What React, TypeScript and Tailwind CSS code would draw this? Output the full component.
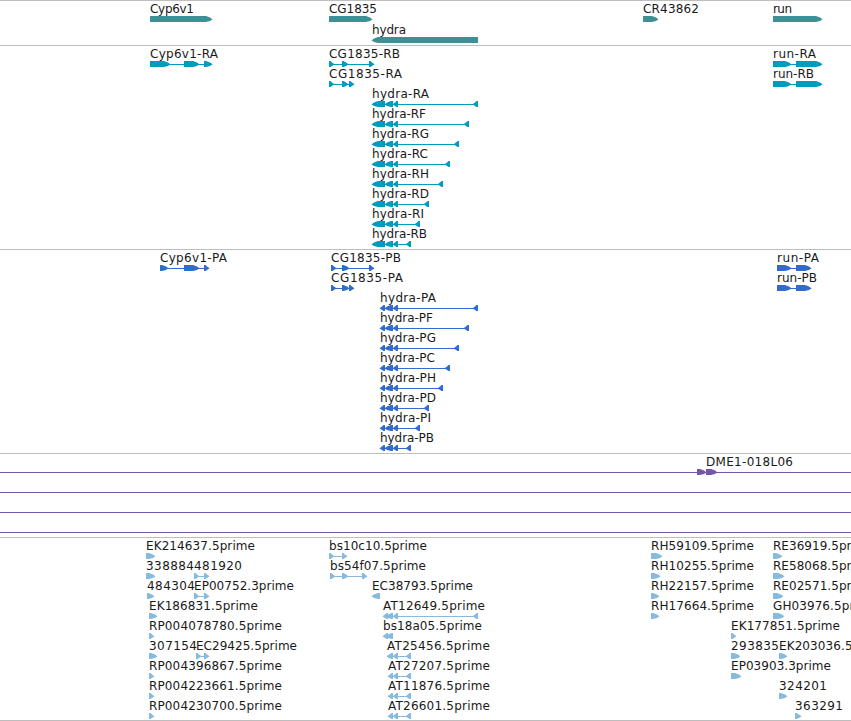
type Exon = [start: number, end: number];

type Feature = {
  label: string;
  x: number;
  width: number;
  exons: Exon[];
  reverse?: boolean;
};

type Row = {
  features: Feature[];
  // the alignment runs past both edges of the view
  spans?: boolean;
};

type Track = {
  id: string;
  className: string;
  rowClassName: string;
  rows: Row[];
};

const VIEW_WIDTH = 851;
const BAR_TOP = 13;
const BAR_HEIGHT = 6;

const fwd = (label: string, x: number, width: number, ...exons: Exon[]): Feature => ({ label, x, width, exons });

const rev = (label: string, x: number, width: number, ...exons: Exon[]): Feature => ({
  label,
  x,
  width,
  exons,
  reverse: true,
});

const hydraRna = (label: string, width: number, end: number) =>
  rev(label, 372, width, [372, 385], [385, 393], [393, 398], [end - 5, end]);

const hydraProtein = (label: string, width: number, end: number) =>
  rev(label, 380, width, [380, 385], [385, 393], [393, 398], [end - 5, end]);

const one = (feature: Feature): Row => ({ features: [feature] });

const tracks: Track[] = [
  {
    id: "gene",
    className: "h-[45px] text-[#3f8f94]",
    rowClassName: "h-[21px]",
    rows: [
      {
        features: [
          fwd("Cyp6v1", 150, 44, [150, 212]),
          fwd("CG1835", 329, 48, [329, 372]),
          fwd("CR43862", 643, 56, [643, 658]),
          fwd("run", 773, 19, [773, 822]),
        ],
      },
      one(rev("hydra", 372, 34, [372, 478])),
    ],
  },
  {
    id: "transcript",
    className: "h-[204px] text-[#009cbd]",
    rowClassName: "h-5",
    rows: [
      {
        features: [
          fwd("Cyp6v1-RA", 150, 68, [150, 170], [184, 199], [204, 212]),
          fwd("CG1835-RB", 329, 71, [329, 334], [342, 348], [369, 374]),
          fwd("run-RA", 773, 43, [773, 791], [796, 822]),
        ],
      },
      {
        features: [
          fwd("CG1835-RA", 329, 73, [329, 334], [342, 348], [349, 354]),
          fwd("run-RB", 773, 41, [773, 791], [796, 822]),
        ],
      },
      one(hydraRna("hydra-RA", 57, 478)),
      one(hydraRna("hydra-RF", 54, 469)),
      one(hydraRna("hydra-RG", 57, 459)),
      one(hydraRna("hydra-RC", 56, 450)),
      one(hydraRna("hydra-RH", 57, 443)),
      one(hydraRna("hydra-RD", 57, 429)),
      one(hydraRna("hydra-RI", 52, 420)),
      one(hydraRna("hydra-RB", 55, 411)),
    ],
  },
  {
    id: "cds",
    className: "h-[204px] text-[#336bcc]",
    rowClassName: "h-5",
    rows: [
      {
        features: [
          fwd("Cyp6v1-PA", 160, 67, [160, 168], [184, 199], [204, 209]),
          fwd("CG1835-PB", 331, 70, [331, 336], [342, 349], [369, 374]),
          fwd("run-PA", 777, 42, [777, 791], [796, 811]),
        ],
      },
      {
        features: [
          fwd("CG1835-PA", 331, 72, [331, 336], [342, 349], [349, 354]),
          fwd("run-PB", 777, 40, [777, 791], [796, 811]),
        ],
      },
      one(hydraProtein("hydra-PA", 56, 478)),
      one(hydraProtein("hydra-PF", 53, 469)),
      one(hydraProtein("hydra-PG", 56, 459)),
      one(hydraProtein("hydra-PC", 55, 450)),
      one(hydraProtein("hydra-PH", 56, 443)),
      one(hydraProtein("hydra-PD", 56, 429)),
      one(hydraProtein("hydra-PI", 51, 420)),
      one(hydraProtein("hydra-PB", 54, 411)),
    ],
  },
  {
    id: "bac",
    className: "h-[84px] text-[#7555a8]",
    rowClassName: "h-5",
    rows: [
      { spans: true, features: [fwd("DME1-018L06", 706, 87, [697, 706], [706, 717])] },
      { spans: true, features: [] },
      { spans: true, features: [] },
      { spans: true, features: [] },
    ],
  },
  {
    id: "est",
    className: "h-[183px] text-[#87bbdd]",
    rowClassName: "h-5",
    rows: [
      {
        features: [
          fwd("EK214637.5prime", 146, 109, [146, 155]),
          fwd("bs10c10.5prime", 329, 98, [329, 334], [342, 347]),
          fwd("RH59109.5prime", 651, 103, [651, 662]),
          fwd("RE36919.5prime", 773, 101, [773, 782]),
        ],
      },
      {
        features: [
          fwd("338884", 146, 48, [146, 155]),
          fwd("481920", 194, 48, [194, 199], [204, 209]),
          fwd("bs54f07.5prime", 330, 96, [330, 335], [342, 348], [362, 367]),
          fwd("RH10255.5prime", 651, 103, [651, 660]),
          fwd("RE58068.5prime", 773, 101, [773, 784]),
        ],
      },
      {
        features: [
          fwd("484304", 147, 48, [147, 154]),
          fwd("EP00752.3prime", 194, 100, [194, 199], [204, 209]),
          rev("EC38793.5prime", 372, 101, [372, 380]),
          fwd("RH22157.5prime", 651, 103, [651, 659]),
          fwd("RE02571.5prime", 773, 101, [773, 783]),
        ],
      },
      {
        features: [
          fwd("EK186831.5prime", 149, 109, [149, 157]),
          rev("AT12649.5prime", 383, 102, [383, 388], [386, 393], [393, 398], [473, 478]),
          fwd("RH17664.5prime", 651, 103, [651, 659]),
          fwd("GH03976.5prime", 773, 104, [773, 784]),
        ],
      },
      {
        features: [
          fwd("RP004078780.5prime", 149, 133, [149, 154]),
          rev("bs18a05.5prime", 383, 99, [383, 388], [386, 393]),
          fwd("EK177851.5prime", 731, 109, [731, 736]),
        ],
      },
      {
        features: [
          fwd("307154", 149, 48, [149, 157]),
          fwd("EC29425.5prime", 196, 101, [196, 201], [204, 209]),
          rev("AT25456.5prime", 387, 103, [387, 393], [393, 398], [406, 411]),
          fwd("293835", 731, 48, [731, 740]),
          fwd("EK203036.5prime", 779, 109, [779, 787]),
        ],
      },
      {
        features: [
          fwd("RP004396867.5prime", 149, 133, [149, 154]),
          rev("AT27207.5prime", 388, 102, [388, 393], [393, 398], [406, 411]),
          fwd("EP03903.3prime", 731, 100, [731, 741]),
        ],
      },
      {
        features: [
          fwd("RP004223661.5prime", 149, 133, [149, 154]),
          rev("AT11876.5prime", 388, 102, [388, 393], [393, 398], [406, 411]),
          fwd("324201", 779, 48, [779, 787]),
        ],
      },
      {
        features: [
          fwd("RP004230700.5prime", 149, 133, [149, 154]),
          rev("AT26601.5prime", 388, 102, [388, 393], [393, 398], [406, 411]),
          fwd("363291", 795, 48, [795, 801]),
        ],
      },
    ],
  },
];

// Block arrow pointing along the strand, with slightly rounded shoulders
function exonPoints([start, end]: Exon, reverse = false) {
  const base = reverse ? end : start;
  const dir = reverse ? -1 : 1;
  const length = end - start;
  const neck = Math.max(1.5, length - 6);
  const shoulder = Math.max(2.5, length - 2);
  const bottom = BAR_TOP + BAR_HEIGHT;
  const middle = BAR_TOP + 3.2;

  return [
    [0, BAR_TOP],
    [neck, BAR_TOP],
    [shoulder, middle - 1.7],
    [length + 0.5, middle],
    [shoulder, middle + 1.7],
    [neck, bottom],
    [0, bottom],
  ]
    .map(([offset, y]) => `${base + dir * offset},${y}`)
    .join(" ");
}

function FeatureGlyph({ feature }: { feature: Feature }) {
  const { label, x, width, exons, reverse } = feature;
  const first = exons[0][0];
  const last = exons[exons.length - 1][1];

  return (
    <g>
      {exons.length > 1 && (
        <rect x={first} y={BAR_TOP + 3} width={last - first} height={1} shapeRendering="crispEdges" />
      )}
      {exons.map((exon, i) => (
        <polygon key={i} points={exonPoints(exon, reverse)} />
      ))}
      <text x={x} y={10} textLength={width} className="fill-[#1a1a1a]">
        {label}
      </text>
    </g>
  );
}

function TrackRow({ row, className }: { row: Row; className: string }) {
  return (
    <svg width={VIEW_WIDTH} className={`block fill-current ${className}`}>
      {row.spans && (
        <rect x={0} y={BAR_TOP + 3} width={VIEW_WIDTH} height={1} shapeRendering="crispEdges" />
      )}
      {row.features.map((feature) => (
        <FeatureGlyph key={feature.label} feature={feature} />
      ))}
    </svg>
  );
}

export default function App() {
  return (
    <main className="flex h-[721px] w-[851px] flex-col overflow-hidden border-b border-[#bdbdbd] bg-white font-['DejaVu_Sans',sans-serif] text-[12px]">
      {tracks.map((track) => (
        <section key={track.id} className={`shrink-0 border-t border-[#bdbdbd] pt-0.5 ${track.className}`}>
          {track.rows.map((row, i) => (
            <TrackRow key={i} row={row} className={track.rowClassName} />
          ))}
        </section>
      ))}
    </main>
  );
}
